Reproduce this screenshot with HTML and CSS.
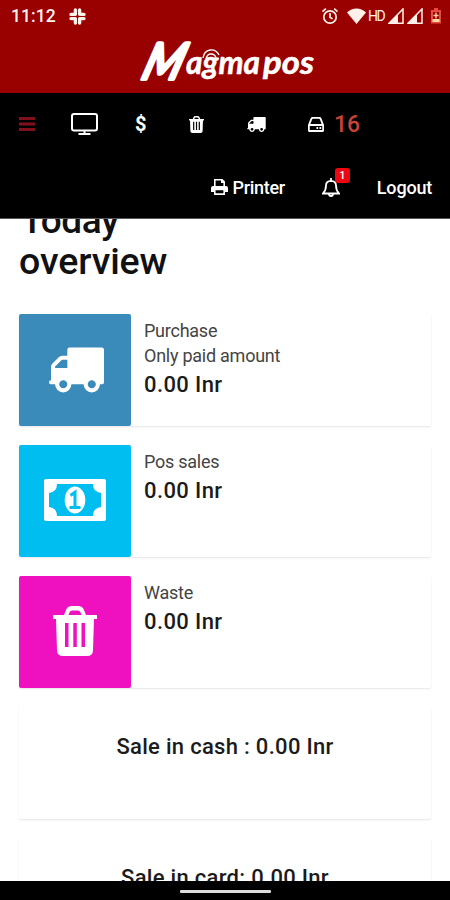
FILE: index.html
```html
<!DOCTYPE html>
<html lang="en">
<head>
<meta charset="utf-8">
<title>Magma pos</title>
<link rel="stylesheet" href="styles.css">
</head>
<body>
<svg class="defs" width="0" height="0" aria-hidden="true">
  <symbol id="truck" viewBox="64 256 1728 1408"><path d="M640 1408q0-52-38-90t-90-38-90 38-38 90 38 90 90 38 90-38 38-90zm-384-512h384v-256h-158q-13 0-22 9l-195 195q-9 9-9 22v30zm1280 512q0-52-38-90t-90-38-90 38-38 90 38 90 90 38 90-38 38-90zm256-1088v1024q0 15-4 26.5t-13.5 18.5-16.5 11.5-23.5 6-22.5 2-25.5 0-22.5-.5q0 106-75 181t-181 75-181-75-75-181h-384q0 106-75 181t-181 75-181-75-75-181h-64q-3 0-22.5.5t-25.5 0-22.5-2-23.5-6-16.5-11.5-13.5-18.5-4-26.5q0-26 19-45t45-19v-320q0-8-.5-35t0-38 2.500-34.500 6.500-37 14-30.500 22.500-30l198-198q19-19 50.500-32t58.500-13h160v-192q0-26 19-45t45-19h1024q26 0 45 19t19 45z"/></symbol>
  <symbol id="trash" viewBox="0 0 44 50"><path fill-rule="evenodd" d="M0 9h11l2-5q1.500-4 6-4h6q4.500 0 6 4l2 5h11v4h-3l-1 31q0 6-6 6H10q-6 0-6-6L3 13H0zM15.500 9h13l-1.200-3q-.7-1.500-2.300-1.500h-6q-1.600 0-2.300 1.500zM12 17v24h3.500V17zM20.300 17v24h3.500V17zM28.500 17v24H32V17z"/></symbol>
  <symbol id="signal" viewBox="0 0 16 16"><path d="M1 15.300L15 1v14.300z" fill="none" stroke="currentColor" stroke-width="1.500"/><path d="M1 15.500L10 6v9.500z"/></symbol>
</svg>
<div class="screen">
  <header class="brand">
    <div class="status">
      <span class="time">11:12</span>
      <svg class="slack" viewBox="0 0 17 17"><g stroke="currentColor" stroke-width="3.400" stroke-linecap="round"><path d="M6.400 2v4.300M10.600 2v4.300M6.400 10.800V15M10.600 10.800V15M2 6.400h4M2 10.600h4M11 6.400h4M11 10.600h4"/></g><path d="M8.500 3v11M3 8.500h11" stroke="#990000" stroke-width=".7"/></svg>
      <div class="indicators">
        <svg class="alarm" viewBox="0 0 18 18" fill="none" stroke="currentColor" stroke-width="1.700"><circle cx="9" cy="10" r="6.200"/><path d="M9 6v4.300l2.600 1.600M1.500 4.600l3.300-2.900M16.500 4.600l-3.300-2.900"/></svg>
        <svg class="wifi" viewBox="0 0 19 16"><path d="M9.500 16L0 4.600Q4.300.5 9.500.5T19 4.600z"/></svg>
        <span class="hd">HD</span>
        <svg class="sig"><use href="#signal"/></svg>
        <svg class="sig"><use href="#signal"/></svg>
        <svg class="battery" viewBox="0 0 12 16"><path d="M4 0h4v2h3v13.500H1V2h3z" fill="#e84a40"/><path d="M3 4h6v7H3z" fill="#990000"/><path d="M6 4.500v6M3.500 7.500h5" stroke="#ffd5b0" stroke-width="1.300"/><path d="M2.500 11h7v3h-7z" fill="#ffd9a0"/></svg>
      </div>
    </div>
    <svg class="logo" viewBox="0 0 180 50">
      <text class="logo-m" transform="translate(2 42) skewX(-18)" textLength="39" lengthAdjust="spacingAndGlyphs">M</text>
      <text class="logo-t" transform="translate(48 37) scale(1 1.060)" textLength="74" lengthAdjust="spacingAndGlyphs">agma</text>
      <text class="logo-t" transform="translate(125 37) scale(1 1.060)" textLength="51" lengthAdjust="spacingAndGlyphs">pos</text>
      <path d="M65 21q1-7 7-8t9 5M68 22q1-5 5-5t5 4" fill="none" stroke="currentColor" stroke-width="1.400"/>
    </svg>
  </header>
  <nav class="nav">
    <div class="tools">
      <svg class="menu" viewBox="0 0 16 14"><path d="M0 1.500h16M0 7h16M0 12.500h16" stroke="currentColor" stroke-width="2.800"/></svg>
      <svg class="monitor" viewBox="0 0 27 22" fill="none" stroke="currentColor" stroke-width="2"><rect x="1" y="1" width="25" height="16.500" rx="2"/><path d="M13.500 18v3M7.500 21h12"/></svg>
      <span class="dollar">$</span>
      <svg class="bin"><use href="#trash"/></svg>
      <svg class="van"><use href="#truck"/></svg>
      <svg class="drive" viewBox="0 0 16 15" fill="none" stroke="currentColor" stroke-width="1.900"><path d="M1 8l2.300-6q.5-1.200 1.700-1.200h6q1.200 0 1.700 1.200L15 8"/><rect x=".8" y="8" width="14.400" height="6" rx="1"/><path d="M8.500 11h1.700M11.500 11h1.700"/></svg>
      <span class="count">16</span>
    </div>
    <div class="account">
      <a class="printer"><svg viewBox="0 0 17 16"><path fill-rule="evenodd" d="M3 0h8.500L14 2.500V7h1q2 0 2 2v4h-3v3H3v-3H0V9q0-2 2-2h1zM4.600 1.600V7h7.800V4H10V1.600zM4.600 11.300v3h7.800v-3z"/></svg>Printer</a>
      <a class="bell"><svg viewBox="0 0 18 19" fill="none" stroke="currentColor" stroke-width="1.800"><path d="M1 15.500q3-3 3-8Q4 3 9 2.800 14 3 14 7.500q0 5 3 8zM9 0v3"/><path d="M7 16q0 2 2 2t2-2"/></svg><span class="badge">1</span></a>
      <a class="logout">Logout</a>
    </div>
  </nav>
  <main class="content">
    <h1><span class="today">Today</span><br>overview</h1>
    <section class="card">
      <div class="tile blue"><svg class="i-truck"><use href="#truck"/></svg></div>
      <div class="info"><p class="l1">Purchase</p><p class="l2">Only paid amount</p><strong>0.00 Inr</strong></div>
    </section>
    <section class="card">
      <div class="tile cyan"><svg class="i-money" viewBox="0 0 62 42"><path fill-rule="evenodd" d="M2 0h58q2 0 2 2v38q0 2-2 2H2q-2 0-2-2V2q0-2 2-2zM13 5q0 8-8 9v14q8 1 8 9h36q0-8 8-9V14q-8-1-8-9z"/><ellipse cx="31" cy="21" rx="10.300" ry="13.500"/><path d="M26.500 16.500l4.500-3.300V28M25.500 28.500h11" fill="none" stroke="#00bff0" stroke-width="3"/></svg></div>
      <div class="info"><p class="l1">Pos sales</p><strong>0.00 Inr</strong></div>
    </section>
    <section class="card">
      <div class="tile pink"><svg class="i-trash"><use href="#trash"/></svg></div>
      <div class="info"><p class="l1">Waste</p><strong>0.00 Inr</strong></div>
    </section>
    <section class="card sale"><span class="s1">Sale in cash : 0.00 Inr</span></section>
    <section class="card sale"><span class="s2">Sale in card: 0.00 Inr</span></section>
  </main>
  <footer class="gesture"><span></span></footer>
</div>
</body>
</html>
```
FILE: styles.css
```css
* { box-sizing: border-box; }
body { margin: 0; font-family: Roboto, sans-serif; color: #1b1b1b; background: #fff; }
h1, p { margin: 0; }
svg { display: block; flex: none; }
.defs { position: absolute; }
.screen { width: 450px; height: 900px; display: flex; flex-direction: column; overflow: hidden; fill: currentColor; }

.brand { height: 93px; background: #990000; color: #fff; flex: none; }
.status { height: 32px; display: flex; align-items: center; padding: 0 8px 0 11px; color: #fff0ea; }
.time { font-size: 17.500px; font-weight: 500; width: 58px; letter-spacing: .1px; }
.slack { width: 17px; height: 17px; }
.indicators { margin-left: auto; display: flex; align-items: center; }
.alarm { width: 18px; height: 18px; margin-right: 8px; }
.wifi { width: 19px; height: 16px; margin-right: 2px; }
.hd { font-size: 14px; width: 20px; letter-spacing: -1.500px; }
.sig { width: 16px; height: 16px; margin-right: 3px; }
.battery { width: 12px; height: 16px; margin-left: 4px; }
.logo { width: 180px; height: 50px; margin: 5px 0 0 138px; overflow: visible; }
.logo-m { font: italic 400 50px Lato, sans-serif; stroke: #fff; stroke-width: 4; stroke-linejoin: round; }
.logo-t { font: italic 700 30px Lato, sans-serif; stroke: #fff; stroke-width: .5; stroke-linejoin: round; }

.nav { height: 126px; background: #000; color: #fff; flex: none; border-bottom: 1px solid #555; }
.tools { height: 62px; display: flex; align-items: center; padding-left: 19px; }
.menu { width: 16px; height: 14px; color: #82101c; margin-right: 36px; }
.monitor { width: 27px; height: 22px; margin-right: 37px; }
.dollar { font-size: 20px; font-weight: 700; width: 54px; }
.bin { width: 15px; height: 17px; margin-right: 43px; }
.van { width: 19px; height: 15px; margin-right: 42px; }
.drive { width: 16px; height: 15px; margin-right: 10px; }
.count { font-size: 23px; font-weight: 500; color: #c84338; }
.account { height: 62px; display: flex; align-items: center; padding: 2px 18px 0 0; justify-content: flex-end; font-size: 18px; font-weight: 500; }
.printer { display: flex; align-items: center; gap: 4px; margin-right: 37px; letter-spacing: -.3px; }
.printer svg { width: 17px; height: 16px; }
.bell { position: relative; margin-right: 37px; }
.bell svg { width: 18px; height: 19px; }
.badge { position: absolute; left: 13px; top: -10px; width: 15px; height: 15px; border-radius: 3px; background: #ed0711; font-size: 11px; line-height: 15px; text-align: center; }
.logout { letter-spacing: -.2px; }

.content { flex: 1; min-height: 0; overflow: hidden; padding: 0 19px; }
h1 { font-size: 37.500px; line-height: 41px; font-weight: 500; letter-spacing: -.1px; margin: -19px 0 32px; color: #111; }
.today { font-size: 37px; margin-left: 2px; letter-spacing: -.4px; }
.card { height: 112px; margin-bottom: 19px; display: flex; box-shadow: 0 1px 2px rgba(0,0,0,.1); border-radius: 2px; }
.tile { width: 112px; flex: none; border-radius: 2px; color: #fff; display: flex; align-items: center; justify-content: center; }
.blue { background: #3b8bba; }
.cyan { background: #00bff0; }
.pink { background: #ef10c0; }
.i-truck { width: 55px; height: 46px; margin-left: 3px; }
.i-money { width: 62px; height: 42px; margin-bottom: 2px; }
.i-trash { width: 44px; height: 50px; margin-bottom: 2px; }
.info { padding: 4px 0 0 13px; font-size: 18px; line-height: 25px; color: #444; letter-spacing: -.25px; }
.info strong { display: block; font-size: 22px; line-height: 33px; font-weight: 500; letter-spacing: .4px; color: #1b1b1b; }
.sale { justify-content: center; padding-top: 26px; font-size: 22px; line-height: 28px; font-weight: 500; letter-spacing: .3px; }
.gesture { height: 19px; background: #000; display: flex; justify-content: center; padding-top: 9px; flex: none; }
.gesture span { width: 91px; height: 3px; background: #ddd; border-radius: 1px; }
```
